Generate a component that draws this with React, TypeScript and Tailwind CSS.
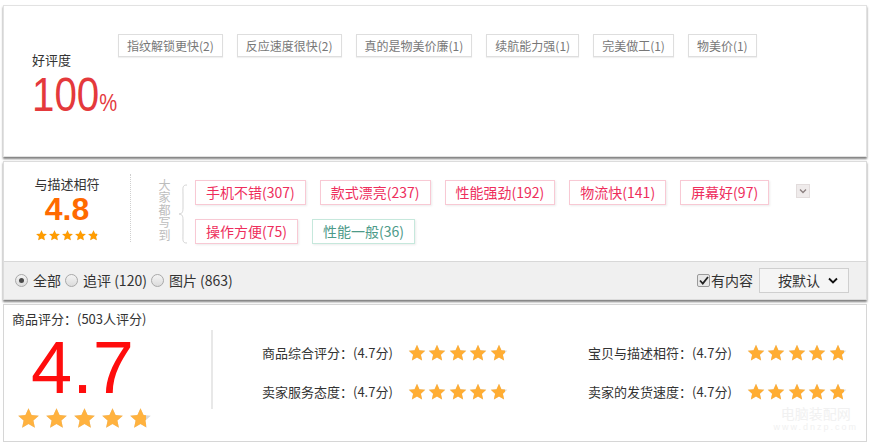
import React from 'react';

const cjk = "font-['Noto_Sans_CJK_SC','Microsoft_YaHei',sans-serif]";

const STAR = 'M12 2.2l2.95 6.35 6.95.75-5.2 4.7 1.45 6.85L12 17.35 5.85 20.85l1.45-6.85-5.2-4.7 6.95-.75z';

function Star({ size, color, fill = 1 }: { size: number; color: string; fill?: number }) {
  return (
    <span className="relative inline-block shrink-0" style={{ width: size, height: size }}>
      <svg viewBox="0 0 24 24" width={size} height={size} className="absolute left-0 top-0">
        <path d={STAR} fill="#d9d9d9" />
      </svg>
      <span className="absolute left-0 top-0 h-full overflow-hidden" style={{ width: size * fill }}>
        <svg viewBox="0 0 24 24" width={size} height={size}>
          <path d={STAR} fill={color} />
        </svg>
      </span>
    </span>
  );
}

function Stars({ size, color, gap, last }: { size: number; color: string; gap: string; last: number }) {
  return (
    <div className={`flex ${gap}`}>
      {[1, 1, 1, 1, last].map((f, i) => (
        <Star key={i} size={size} color={color} fill={f} />
      ))}
    </div>
  );
}

const topTags = ['指纹解锁更快(2)', '反应速度很快(2)', '真的是物美价廉(1)', '续航能力强(1)', '完美做工(1)', '物美价(1)'];

const hotTags = [
  { t: '手机不错(307)', good: true },
  { t: '款式漂亮(237)', good: true },
  { t: '性能强劲(192)', good: true },
  { t: '物流快(141)', good: true },
  { t: '屏幕好(97)', good: true },
  { t: '操作方便(75)', good: true },
  { t: '性能一般(36)', good: false },
];

function Radio({ on }: { on?: boolean }) {
  return (
    <span className="w-[13px] h-[13px] rounded-full border border-[#a9a9a9] bg-gradient-to-b from-[#f4f4f4] to-[#dcdcdc] flex items-center justify-center">
      {on && <span className="w-[5px] h-[5px] rounded-full bg-[#4a4a4a]" />}
    </span>
  );
}

export default function App() {
  return (
    <div className={`w-[870px] h-[443px] bg-white px-[3px] pt-[5px] ${cjk} overflow-hidden`}>
      {/* 好评度 */}
      <div className="h-[152px] border border-[#e2e2e2] bg-white shadow-[0_2px_2px_rgba(0,0,0,0.5)] flex">
        <div className="w-[114px] shrink-0 pl-[28px] pt-[46px]">
          <div className="text-[13px] leading-[16px] text-[#333]">好评度</div>
          <div className="mt-[3px] inline-flex items-baseline origin-left scale-x-[0.84] text-[#e4393c] font-['Liberation_Sans',sans-serif] whitespace-nowrap">
            <span className="text-[48px] leading-none">100</span>
            <span className="text-[24px] leading-none">%</span>
          </div>
        </div>
        <div className="pt-[28px] flex gap-[14px] items-start">
          {topTags.map((t) => (
            <span
              key={t}
              className="h-[23px] px-[8px] border border-[#dedede] shadow-[0_1px_1px_rgba(0,0,0,0.06)] text-[12px] leading-[21px] text-[#777] whitespace-nowrap"
            >
              {t}
            </span>
          ))}
        </div>
      </div>

      {/* 大家都写到 */}
      <div className="mt-[4px] border border-[#dcdcdc] shadow-[0_2px_2px_rgba(0,0,0,0.5)]">
        <div className="h-[99px] bg-white flex">
          <div className="w-[126px] shrink-0 pt-[14px] flex flex-col items-center">
            <div className="text-[13px] leading-[16px] text-[#333]">与描述相符</div>
            <div className="mt-[1px] text-[32px] leading-none font-bold text-[#ff6a00] font-['Liberation_Sans',sans-serif]">4.8</div>
            <div className="mt-[4px]">
              <Stars size={13} color="#ff9c00" gap="gap-0" last={0.8} />
            </div>
          </div>
          <div className="mt-[12px] h-[68px] border-l border-dotted border-[#cfcfcf]" />
          <div className="ml-[27px] mt-[17px] w-[13px] h-[66px] whitespace-nowrap text-[12px] leading-[13px] tracking-[0.5px] text-[#bdbdbd] [writing-mode:vertical-lr]">
            大家都写到
          </div>
          <svg className="ml-[7px] mt-[22px]" width="10" height="60" viewBox="0 0 10 60">
            <path
              d="M9 1 C4 1 5 4 5 10 L5 24 C5 28 4 30 1 30 C4 30 5 32 5 36 L5 50 C5 56 4 59 9 59"
              fill="none"
              stroke="#d4d4d4"
              strokeWidth="1"
            />
          </svg>
          <div className="ml-[7px] pt-[18px] w-[585px] flex flex-wrap gap-[14px] content-start">
            {hotTags.map((x) => (
              <span
                key={x.t}
                className={`h-[25px] px-[10px] border text-[14px] leading-[23px] whitespace-nowrap shadow-[1px_1px_2px_rgba(0,0,0,0.08)] ${
                  x.good ? 'border-[#f8c9d4] text-[#ee2e5c]' : 'border-[#c6e8dc] text-[#4d9a88]'
                }`}
              >
                {x.t}
              </span>
            ))}
          </div>
          <div className="ml-[16px] mt-[22px] w-[14px] h-[14px] bg-[#efebeb] border border-[#e2dcdc] flex items-center justify-center">
            <svg width="8" height="6" viewBox="0 0 8 6">
              <path d="M1 1.5 L4 4.5 L7 1.5" fill="none" stroke="#8a7f7f" strokeWidth="1.3" />
            </svg>
          </div>
        </div>
        <div className="h-[38px] border-t border-[#d8d8d8] bg-[#f0f0f0] flex items-center pl-[11px] pr-[17px] text-[14px] text-[#333]">
          <label className="flex items-center gap-[5px]">
            <Radio on />
            <span>全部</span>
          </label>
          <label className="ml-[4px] flex items-center gap-[5px]">
            <Radio />
            <span>追评 (120)</span>
          </label>
          <label className="ml-[4px] flex items-center gap-[5px]">
            <Radio />
            <span>图片 (863)</span>
          </label>
          <div className="ml-auto flex items-center">
            <span className="w-[13px] h-[13px] border border-[#9a9a9a] bg-[#e8e8e8] rounded-[2px] flex items-center justify-center">
              <svg width="10" height="9" viewBox="0 0 10 9">
                <path d="M1 4.5 L3.8 7.5 L9 1" fill="none" stroke="#222" strokeWidth="1.8" />
              </svg>
            </span>
            <span className="ml-[1px]">有内容</span>
            <div className="ml-[6px] w-[90px] h-[25px] border border-[#cfcfcf] bg-[#f5f5f5] flex items-center justify-between pl-[18px] pr-[10px]">
              <span className="text-[14px]">按默认</span>
              <svg width="10" height="7" viewBox="0 0 10 7">
                <path d="M1 1.5 L5 5.5 L9 1.5" fill="none" stroke="#111" strokeWidth="1.8" />
              </svg>
            </div>
          </div>
        </div>
      </div>

      {/* 商品评分 */}
      <div className="relative mt-[4px] h-[138px] border border-[#d6d6d6] bg-white pl-[8px] pt-[6px]">
        <div className="text-[13px] leading-[15px] text-[#333]">商品评分：(503人评分)</div>
        <div className="flex items-start">
          <div className="w-[199px] shrink-0 pt-[11px]">
            <div className="pl-[19px] text-[74px] leading-[62px] text-[#ff0d0d] font-['Liberation_Sans',sans-serif]">4.7</div>
            <div className="mt-[7px] pl-[4px]">
              <Stars size={25} color="#ffb23f" gap="gap-[3px]" last={0.72} />
            </div>
          </div>
          <div className="mt-[4px] h-[79px] w-[2px] bg-[#e8e8e8]" />
          <div className="pl-[49px] pt-[17px] grid grid-cols-[326px_auto] content-start gap-y-[19px] text-[13px] text-[#333]">
            {[
              '商品综合评分：(4.7分)',
              '宝贝与描述相符：(4.7分)',
              '卖家服务态度：(4.7分)',
              '卖家的发货速度：(4.7分)',
            ].map((t) => (
              <div key={t} className="flex items-center h-[20px] gap-[14px] whitespace-nowrap">
                <span>{t}</span>
                <Stars size={20} color="#ffad33" gap="gap-[0.5px]" last={0.8} />
              </div>
            ))}
          </div>
        </div>
        <div className="absolute right-[8px] bottom-[8px] flex flex-col items-center text-[#f1f1f1] pointer-events-none">
          <span className="text-[14px] leading-[16px]">电脑装配网</span>
          <span className="text-[9px] leading-[12px] tracking-[2px] font-['Liberation_Sans',sans-serif]">www.dnzp.com</span>
        </div>
      </div>
    </div>
  );
}
